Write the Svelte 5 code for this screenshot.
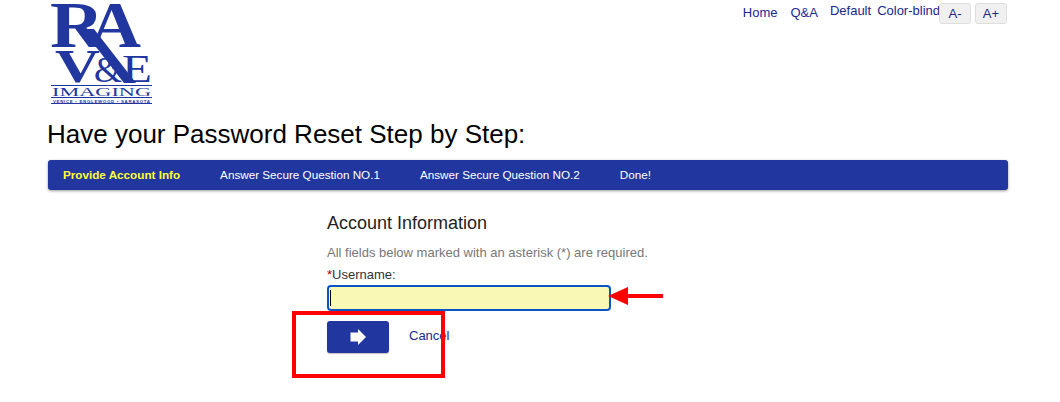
<script>
	const steps = ['Provide Account Info', 'Answer Secure Question NO.1', 'Answer Secure Question NO.2', 'Done!']
</script>

<main>
	<header>
		<svg class="logo" width="104" height="104" viewBox="0 0 104 104" role="img" aria-label="RA V&E Imaging">
			<text class="bold" x="0" y="46" font-size="66" textLength="54" lengthAdjust="spacingAndGlyphs">R</text>
			<text class="bold" x="39" y="46" font-size="66" textLength="52" lengthAdjust="spacingAndGlyphs">A</text>
			<path d="M32 28 L74 82 L86 82 L44 28 Z" />
			<text class="bold" x="5" y="81" font-size="46" textLength="45" lengthAdjust="spacingAndGlyphs">V</text>
			<text x="44" y="81" font-size="36" textLength="28" lengthAdjust="spacingAndGlyphs">&amp;</text>
			<text x="72" y="81" font-size="40" textLength="30" lengthAdjust="spacingAndGlyphs">E</text>
			<rect x="1" y="84" width="101" height="1" />
			<text x="2" y="95" font-size="13" textLength="99" lengthAdjust="spacingAndGlyphs">IMAGING</text>
			<rect x="1" y="96" width="101" height="1" />
			<text class="towns" x="3" y="101.5" font-size="4.4" textLength="97">VENICE • ENGLEWOOD • SARASOTA</text>
			<rect x="1" y="102" width="101" height="1" />
		</svg>
		<div class="top-links">
			<a class="low home" href="#home">Home</a>
			<a class="low" href="#qa">Q&amp;A</a>
			<a class="tight" href="#default">Default</a>
			<a class="last" href="#blind">Color-blind</a>
			<div class="sizes">
				<button>A-</button>
				<button>A+</button>
			</div>
		</div>
	</header>

	<h1>Have your Password Reset Step by Step:</h1>

	<nav>
		{#each steps as step, i}
			<span class:active={i === 0}>{step}</span>
		{/each}
	</nav>

	<section class="form">
		<h3>Account Information</h3>
		<p>All fields below marked with an asterisk (*) are required.</p>
		<label for="username"><b>*</b>Username:</label>
		<div class="field">
			<span class="caret"></span>
			<input id="username" type="text" />
			<svg class="pointer" width="56" height="20" viewBox="0 0 56 20">
				<path d="M0 10 L20 1 V8 H55 V12 H20 V19 Z" />
			</svg>
		</div>
		<div class="actions">
			<button class="next" aria-label="Next">
				<svg width="16" height="16" viewBox="0 0 16 16"><path d="M0.5 3.5 H8 V0 L16 8 L8 16 V12.5 H0.5 Z" /></svg>
			</button>
			<a href="#cancel">Cancel</a>
			<div class="redbox"></div>
		</div>
	</section>
</main>

<style>
	:global(body) {
		margin: 0;
		background: #fff;
		font-family: "Liberation Sans", Arial, sans-serif;
	}
	main {
		width: 1060px;
		height: 402px;
		overflow: hidden;
		padding: 0 53px 0 47px;
		box-sizing: border-box;
	}
	header {
		display: flex;
		justify-content: space-between;
		height: 104px;
	}
	.logo {
		margin: 1px 0 0 3px;
		fill: #21379f;
		overflow: visible;
	}
	.logo text {
		font-family: "Liberation Serif", serif;
	}
	.logo .bold {
		font-weight: bold;
	}
	.logo .towns {
		font-family: "Liberation Sans", sans-serif;
		font-weight: bold;
	}
	.top-links {
		display: flex;
		align-items: flex-start;
		font-size: 13px;
		margin-top: 3px;
	}
	.top-links a {
		color: #21288f;
		text-decoration: none;
		line-height: 15px;
	}
	.top-links a.low {
		margin-top: 2px;
		margin-right: 12px;
	}
	.top-links a.home {
		margin-right: 13px;
	}
	.top-links a.tight {
		margin-right: 6px;
	}
	.sizes {
		display: flex;
		gap: 4px;
		margin-left: -1px;
	}
	.sizes button {
		width: 32px;
		height: 21px;
		padding: 0;
		border: 1px solid #dedede;
		border-radius: 3px;
		background: #f0f0f0;
		color: #21288f;
		font: 13px "Liberation Sans", sans-serif;
	}
	h1 {
		margin: 15px 0 0;
		font-size: 26px;
		font-weight: normal;
		line-height: 30px;
		color: #000;
	}
	nav {
		display: flex;
		gap: 40px;
		align-items: center;
		height: 30px;
		margin: 11px -1px 0 1px;
		padding: 0 0 2px 15px;
		box-sizing: border-box;
		background: #21379f;
		border-radius: 3px;
		box-shadow: 0 1px 3px rgba(0, 0, 0, 0.4);
		font-size: 11.7px;
		color: #fff;
	}
	nav .active {
		color: #ffff33;
		font-weight: bold;
	}
	.form {
		margin: 23px 0 0 280px;
		width: 284px;
	}
	h3 {
		margin: 0;
		font-size: 18px;
		font-weight: normal;
		line-height: 20px;
		color: #222;
	}
	p {
		margin: 12px 0 0;
		font-size: 13px;
		line-height: 15px;
		color: #777;
		white-space: nowrap;
	}
	label {
		display: block;
		margin-top: 7px;
		font-size: 13px;
		line-height: 15px;
		color: #333;
	}
	label b {
		color: #a00;
		font-weight: normal;
	}
	.field {
		position: relative;
		margin-top: 3px;
	}
	input {
		display: block;
		width: 284px;
		height: 26px;
		box-sizing: border-box;
		border: 2px solid #0a55c5;
		border-radius: 4px;
		background: #faf8b5;
		outline: none;
	}
	.caret {
		position: absolute;
		left: 3px;
		top: 5px;
		width: 1px;
		height: 16px;
		background: #000;
		z-index: 1;
	}
	.pointer {
		position: absolute;
		left: 281px;
		top: 1px;
		fill: #f00;
	}
	.actions {
		position: relative;
		display: flex;
		align-items: center;
		gap: 20px;
		margin-top: 10px;
		font-size: 13px;
	}
	.actions a {
		color: #21288f;
		text-decoration: none;
		margin-top: -4px;
	}
	.next {
		display: grid;
		place-items: center;
		width: 62px;
		height: 32px;
		padding: 0;
		border: 0;
		border-radius: 3px;
		background: #21379f;
		box-shadow: 0 1px 1px rgba(0, 0, 0, 0.25);
	}
	.next svg {
		fill: #fff;
	}
	.redbox {
		position: absolute;
		left: -35px;
		top: -10px;
		width: 153px;
		height: 67px;
		box-sizing: border-box;
		border: 4px solid #f00;
	}
</style>
